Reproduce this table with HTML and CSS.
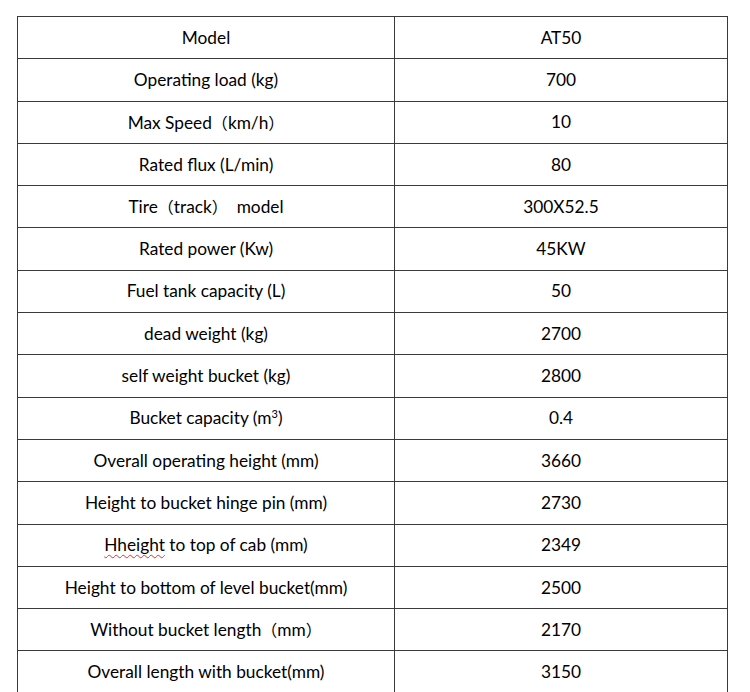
FILE: index.html
```html
<!DOCTYPE html>
<html>
<head>
<meta charset="utf-8">
<link rel="stylesheet" href="styles.css">
</head>
<body>
<table class="spec">
<tr><td>Model</td><td>AT50</td></tr>
<tr><td>Operating load (kg)</td><td>700</td></tr>
<tr><td>Max Speed<span class="cjk">（</span>km/h<span class="cjk">）</span></td><td>10</td></tr>
<tr><td>Rated flux (L/min)</td><td>80</td></tr>
<tr><td>Tire<span class="cjk">（</span>track<span class="cjk">）</span>&nbsp; model</td><td>300X52.5</td></tr>
<tr><td>Rated power (Kw)</td><td>45KW</td></tr>
<tr><td>Fuel tank capacity (L)</td><td>50</td></tr>
<tr><td>dead weight (kg)</td><td>2700</td></tr>
<tr><td>self weight bucket (kg)</td><td>2800</td></tr>
<tr><td>Bucket capacity (m<span class="sup">3</span>)</td><td>0.4</td></tr>
<tr><td>Overall operating height (mm)</td><td>3660</td></tr>
<tr><td>Height to bucket hinge pin (mm)</td><td>2730</td></tr>
<tr><td><span class="spell">Hheight</span> to top of cab (mm)</td><td>2349</td></tr>
<tr><td>Height to bottom of level bucket(mm)</td><td>2500</td></tr>
<tr><td>Without bucket length<span class="cjk">（</span>mm<span class="cjk">）</span></td><td>2170</td></tr>
<tr><td>Overall length with bucket(mm)</td><td>3150</td></tr>
</table>
</body>
</html>
```
FILE: styles.css
```css
html, body {
  margin: 0;
  padding: 0;
  background: #fff;
}
body {
  padding: 16px 0 0 17px;
  font-family: Lato, "Open Sans", sans-serif;
  font-size: 17.3px;
  color: #000;
}
.spec {
  border-collapse: collapse;
  table-layout: fixed;
  width: 711px;
}
.spec td {
  border: 1px solid #3a3a3a;
  height: 41.3px;
  padding: 0;
  text-align: center;
  vertical-align: middle;
  white-space: nowrap;
  line-height: 20px;
}
.spec td:first-child {
  width: 376px;
}
.cjk {
  font-family: "Noto Sans CJK SC", sans-serif;
  font-size: 16px;
}
.sup {
  font-size: 11px;
  vertical-align: 6px;
  line-height: 0;
}
.spell {
  text-decoration: underline wavy #e03030;
  text-decoration-thickness: 1px;
  text-underline-offset: 3px;
}
```
